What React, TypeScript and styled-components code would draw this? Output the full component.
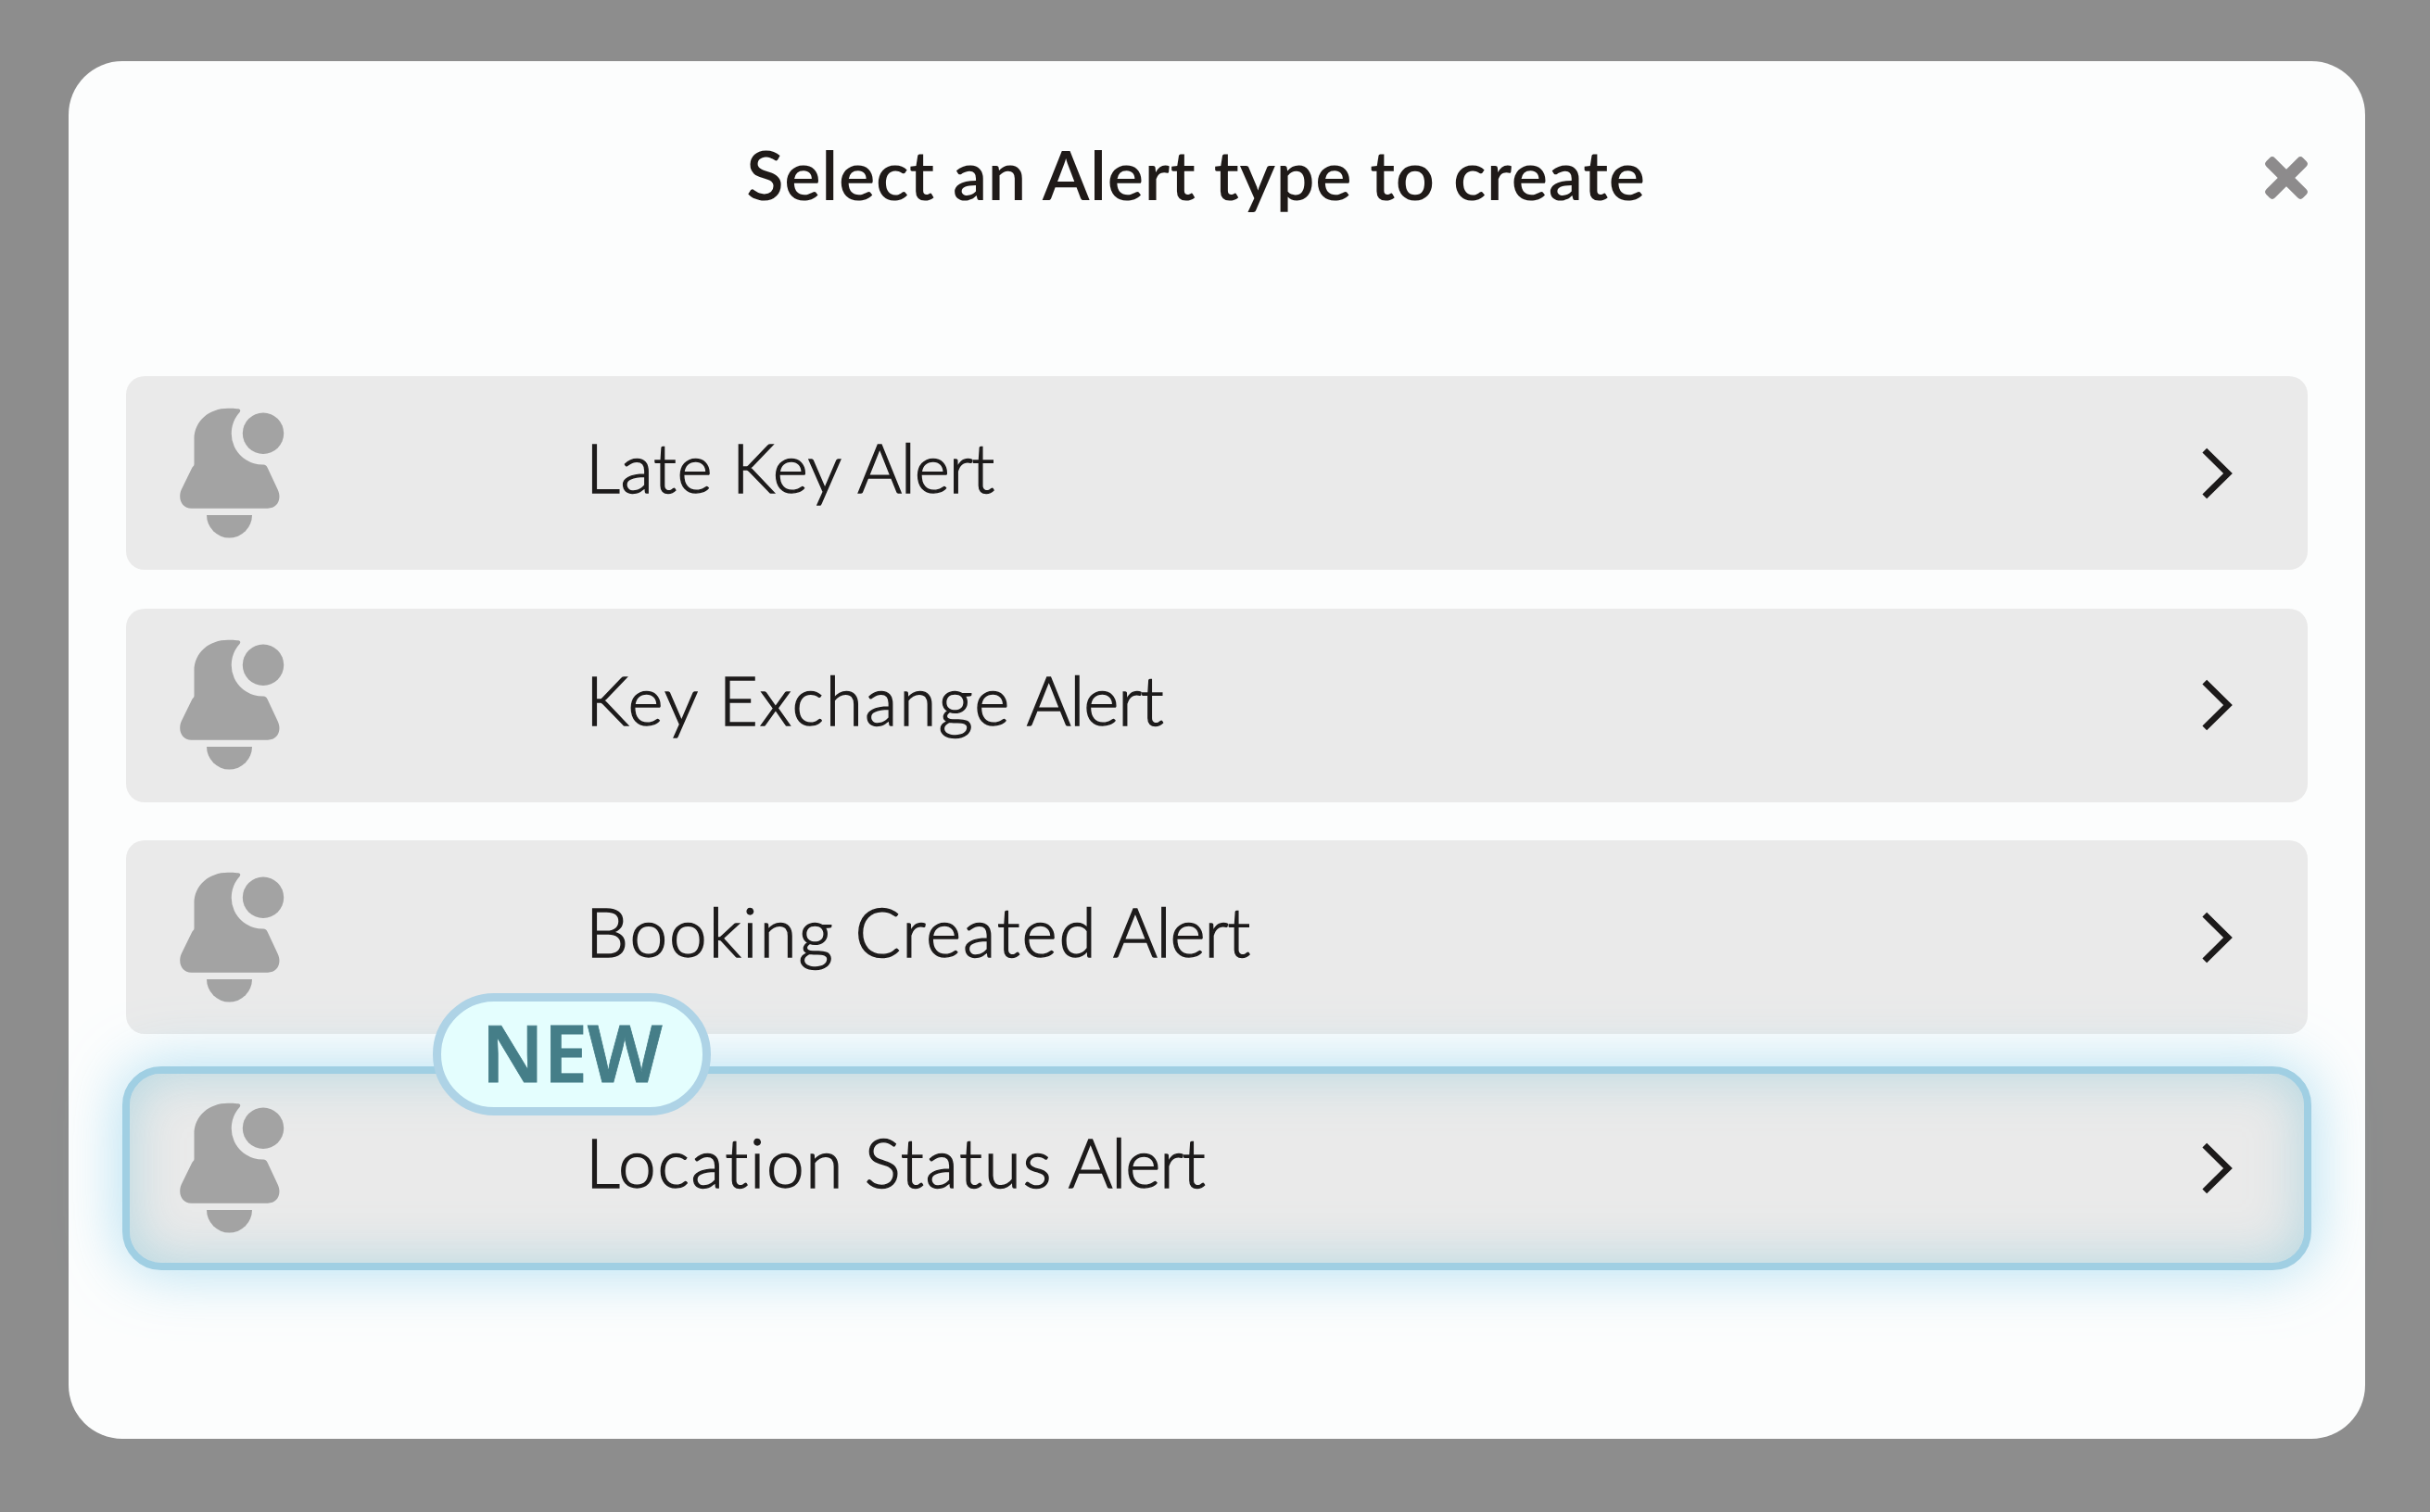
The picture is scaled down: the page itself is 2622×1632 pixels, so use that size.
import styled, { createGlobalStyle, css } from "styled-components";

interface AlertType {
  name: string;
  spacing: number;
  isNew?: boolean;
}

interface AlertRowProps {
  alert: AlertType;
}

const alertTypes: AlertType[] = [
  { name: "Late Key", spacing: 0.6 },
  { name: "Key Exchange", spacing: 2 },
  { name: "Booking Created", spacing: 1.9 },
  { name: "Location Status", spacing: 1.7, isNew: true },
];

const BellIcon = () => (
  <svg width="120" height="146" viewBox="0 0 120 146" fill="#a3a3a3">
    <path d="M19.5 64V37C19.5 17 36 3.7 56 3.7C60 3.7 64 3.9 67 4.3C69.5 4.7 69.8 6.3 68.6 8A33.8 33.8 0 0 0 94 64.6C96.6 64.7 97.7 66 98.7 68L109.7 91.5C114.5 102 109 111.7 99 111.7H16.5C6.5 111.7 1.5 101.5 5.7 91.5L17.2 68C18.4 66 19.5 66 19.5 64Z" />
    <circle cx="94" cy="30.7" r="22.2" />
    <path d="M33 119H82A24.5 24.5 0 0 1 33 119Z" />
  </svg>
);

const ChevronIcon = () => (
  <svg width="36" height="62" viewBox="0 0 36 62" fill="none">
    <path
      d="M2.8 6.2L28 31L2.8 55.8"
      stroke="#1c1a1a"
      strokeWidth="6.8"
    />
  </svg>
);

const CloseIcon = () => (
  <svg width="50" height="50" viewBox="-25 -25 50 50" fill="#8d8b8c">
    <rect x="-28" y="-6.5" width="56" height="13" rx="4" transform="rotate(45)" />
    <rect x="-28" y="-6.5" width="56" height="13" rx="4" transform="rotate(-45)" />
  </svg>
);

const AlertRow = ({ alert }: AlertRowProps) => {
  return (
    <Row $highlight={alert.isNew}>
      <IconCell>
        <BellIcon />
      </IconCell>
      <Label>
        <Name $spacing={alert.spacing}>{alert.name}</Name> Alert
      </Label>
      <ChevronIcon />
      {alert.isNew && <Badge>NEW</Badge>}
    </Row>
  );
};

const App = () => {
  return (
    <>
      <GlobalStyle />
      <Overlay>
        <Modal>
          <Header>
            <Title>Select an Alert type to create</Title>
            <CloseButton aria-label="Close">
              <CloseIcon />
            </CloseButton>
          </Header>
          <List>
            {alertTypes.map((alert) => (
              <AlertRow key={alert.name} alert={alert} />
            ))}
          </List>
        </Modal>
      </Overlay>
    </>
  );
};

const GlobalStyle = createGlobalStyle`
  * {
    box-sizing: border-box;
  }

  body {
    margin: 0;
    background: #8d8d8d;
    font-family: Lato, "Open Sans", sans-serif;
    font-variant-ligatures: none;
  }

  svg {
    display: block;
    flex-shrink: 0;
  }
`;

const Overlay = styled.div`
  height: 1632px;
  padding: 66px 70px 79px 74px;
  background: #8d8d8d;
`;

const Modal = styled.div`
  height: 100%;
  padding: 0 62px;
  border-radius: 58px;
  background: #fcfdfd;
`;

const Header = styled.header`
  display: flex;
  align-items: center;
  height: 340px;
  padding: 0 0 88px;
`;

const Title = styled.h1`
  flex: 1;
  margin: 0;
  padding: 0 0 9px 3px;
  text-align: center;
  font-size: 74px;
  font-weight: 600;
  line-height: 90px;
  letter-spacing: 0.7px;
  white-space: nowrap;
  color: #1f1a18;
`;

const CloseButton = styled.button`
  display: flex;
  padding: 0;
  margin-right: -2px;
  border: 0;
  background: none;
`;

const List = styled.ul`
  display: flex;
  flex-direction: column;
  gap: 41.5px;
  margin: 0;
  padding: 0;
`;

const Row = styled.li<{ $highlight?: boolean }>`
  position: relative;
  display: flex;
  align-items: center;
  height: 209px;
  padding: 0 78px 0 54px;
  border-radius: 20px;
  background: #eaeaea;

  ${({ $highlight }) =>
    $highlight &&
    css`
      height: 220px;
      margin: -7px -4px 0;
      padding: 0 74px 0 50px;
      border: 8px solid #a0cfe3;
      border-radius: 42px;
      box-shadow:
        0 0 64px rgba(150, 212, 238, 0.75),
        inset 0 0 56px rgba(160, 208, 222, 0.75);
    `}
`;

const IconCell = styled.div`
  width: 442px;
  padding-bottom: 2px;
`;

const Label = styled.span`
  flex: 1;
  padding-bottom: 13px;
  font-size: 73px;
  font-weight: 300;
  line-height: 90px;
  letter-spacing: -1.1px;
  white-space: nowrap;
  color: #1d1b1b;
  -webkit-text-stroke: 1.4px #1d1b1b;
`;

const Name = styled.span<{ $spacing: number }>`
  letter-spacing: ${({ $spacing }) => $spacing}px;
`;

const Badge = styled.span`
  position: absolute;
  top: -87px;
  left: 327px;
  display: flex;
  align-items: center;
  justify-content: center;
  width: 300px;
  height: 132px;
  padding-bottom: 6px;
  border: 9px solid #aed3e6;
  border-radius: 66px;
  background: #e4fefe;
  font-family: "Noto Sans", "Open Sans", sans-serif;
  font-size: 85px;
  font-weight: 600;
  letter-spacing: -0.3px;
  color: #457e88;
  -webkit-text-stroke: 0.8px #457e88;
`;

export default App;
